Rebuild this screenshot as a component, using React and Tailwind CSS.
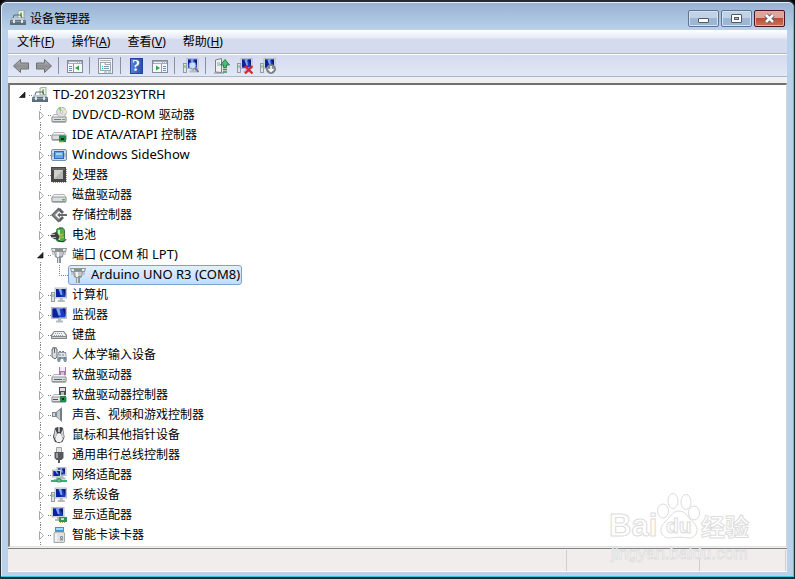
import React from 'react';

const CJK = /([\u3000-\u9fff]+)/;

function Label({ text }) {
  return (
    <span className="block h-5 pl-[5px] leading-[18px] whitespace-pre">
      {text.split(CJK).map((part, i) =>
        CJK.test(part) ? <span key={i}>{part}</span> : <span key={i} className="text-[13px]">{part}</span>
      )}
    </span>
  );
}

function Glyph({ children, size = 16 }) {
  return (
    <svg width={size} height={size} viewBox="0 0 16 16" className="block shrink-0" aria-hidden="true">
      {children}
    </svg>
  );
}

function Drive({ y = 9 }) {
  return (
    <g>
      <path d={`M3 ${y - 3}h10l2.500 3v4.500l-1 1.500h-13l-1-1.500v-4.500z`} fill="#b3b6b9" />
      <path d={`M3 ${y - 2}h10l1.500 2h-13z`} fill="#f4f5f5" />
      <rect x="1" y={y} width="14" height="4.500" rx="1" fill="#dcdedf" stroke="#83878b" strokeWidth=".8" />
    </g>
  );
}

function Screen({ x = 4, y = 1, w = 11, h = 9 }) {
  return (
    <g>
      <rect x={x} y={y} width={w} height={h} fill="#e6e9ee" stroke="#a7adb8" strokeWidth=".8" />
      <rect x={x + 1} y={y + 1} width={w - 2} height={h - 2} fill="#1a3cc4" />
      <path d={`M${x + 1} ${y + 1}h${w * 0.3}l2 ${h - 2}h-${w * 0.3 + 2}z`} fill="#0d2298" />
      <path d={`M${x + w * 0.3} ${y + 1}h${w * 0.25}l1 ${h - 4}h-${w * 0.15}z`} fill="#7da4f2" />
      <path d={`M${x + w - 4} ${y + 1}h3v${h - 3}z`} fill="#0c1c74" />
      <path d={`M${x + w / 2 - 1} ${y + h}h3v2h2v2h-7v-2h2z`} fill="#b4bac4" />
    </g>
  );
}

function Tower() {
  return (
    <g>
      <rect x=".5" y="5.500" width="3" height="9" fill="#e2e5e8" stroke="#8d939a" strokeWidth=".9" />
      <rect x="1.500" y="7" width="1" height="3" fill="#56b34c" />
    </g>
  );
}

const icons = {
  root: (
    <Glyph>
      <path d="M8 1l6-1v8h-6z" fill="#f3f4ee" stroke="#8d958e" strokeWidth=".8" />
      <path d="M10 3l2-1v4l-2 1z" fill="#71bf4d" />
      <path d="M3 8l1-3h7l1 3" fill="none" stroke="#5b6872" />
      <path d="M2 8h12l2 3v4h-16v-4z" fill="#5c6d7b" />
      <path d="M2 8h12l1 2h-14z" fill="#bdc9d1" />
      <path d="M1 11h14v1h-14z" fill="#8d9ba8" />
      <path d="M3 10h2v3h-2zM11 10h2v3h-2z" fill="#e1e6e9" />
    </Glyph>
  ),
  disc: (
    <Glyph>
      <Drive y={10} />
      <ellipse cx="10.500" cy="5" rx="4.800" ry="5" fill="#dedfe0" stroke="#9a9d9e" strokeWidth=".7" />
      <path d="M10 5L7 1a5 5 0 0 1 3-1z" fill="#84cf65" />
      <path d="M10 5l5-2v3z" fill="#f5eac7" />
      <circle cx="10.500" cy="5" r="1.300" fill="#fff" stroke="#999" strokeWidth=".6" />
      <path d="M3 12h7v1h-7z" fill="#777b7e" /><path d="M11 12h3v1h-3z" fill="#4dbb35" />
    </Glyph>
  ),
  ide: (
    <Glyph>
      <Drive y={8} />
      <rect x="8" y="9" width="7" height="6" fill="#23894b" />
      <path d="M9 8v1M11 8v1M13 8v1" stroke="#155e34" />
      <rect x="10" y="11" width="3" height="2" fill="#142d22" /><path d="M8 15h5" stroke="#d9ba4e" />
    </Glyph>
  ),
  side: (
    <Glyph>
      <rect x=".5" y="2.500" width="15" height="11" rx="1.500" fill="#c9dbec" stroke="#7792b0" />
      <rect x="3.500" y="4.500" width="9" height="7" fill="#69a5e6" stroke="#2f69b4" />
      <path d="M5 6h6v2h-6z" fill="#a9d0f5" />
      <path d="M2 6v4M14 6v4" stroke="#829fc0" />
    </Glyph>
  ),
  cpu: (
    <Glyph>
      <path d="M2 15.500h13M15.500 2v13" stroke="#bd9c4b" strokeDasharray="1 1" />
      <rect x="0" y="0" width="15" height="15" fill="#484745" />
      <path d="M1 1h13v2h-13z" fill="#686664" />
      <rect x="3" y="3" width="9" height="9" fill="#b4b4b3" />
      <path d="M3 3h9l-9 9z" fill="#d0d0ce" />
    </Glyph>
  ),
  disk: (
    <Glyph><Drive y={10} /><path d="M11 12h3v1.500h-3z" fill="#48c033" /></Glyph>
  ),
  storage: (
    <Glyph>
      <path d="M8.500 1.500L2 8l6.500 6.500" fill="none" stroke="#5d6062" strokeWidth="2.800" />
      <path d="M8 2l4 4M8 14l4-4" stroke="#5d6062" strokeWidth="2.800" />
      <path d="M8 2.500L2.500 8L8 13.500" fill="none" stroke="#a2a5a6" />
      <path d="M6 8l3-2.500v1.500h7v2h-7v1.500z" fill="#676b6d" />
    </Glyph>
  ),
  battery: (
    <Glyph>
      <path d="M8 0h4v2h-4z" fill="#8c8f89" />
      <rect x="5.500" y="1.500" width="8" height="13" rx="2" fill="#45b34c" stroke="#3a7a3b" />
      <path d="M7 3h2v10h-2z" fill="#c4f2bc" />
      <path d="M0 7l5-2 4 4-2 4-4-1-3-2z" fill="#3d413f" />
      <path d="M0 7.500h4M0 10.500h5" stroke="#b3b7b2" />
      <path d="M8 9l4-2M8 11l5-1" stroke="#d4ae39" strokeWidth="1.500" />
      <path d="M7 13c4 3 7 2 8-1" fill="none" stroke="#283329" />
    </Glyph>
  ),
  port: (
    <Glyph>
      <path d="M0 1h16l-1 4h-2l-1 5-2 1v5h-4v-5l-2-1-1-5h-2z" fill="#8f9598" />
      <path d="M1 2h14l-1 2h-12z" fill="#e9ebec" />
      <path d="M4 2h8v2h-8z" fill="#8a8f92" />
      <path d="M4 5h8l-1 4h-6z" fill="#c4c8ca" />
      <path d="M6 5h2v5h-2z" fill="#f4f5f5" />
      <path d="M7 11h1v5h-1z" fill="#dfe1e2" />
      <path d="M2 5v3M14 5v3" stroke="#a1a6a9" />
    </Glyph>
  ),
  computer: (<Glyph><Tower /><Screen x={4} y={1} w={11.5} h={10} /></Glyph>),
  monitor: (<Glyph><Screen x={0.5} y={0.5} w={15} h={11} /></Glyph>),
  keyboard: (
    <Glyph>
      <path d="M3 4h10l3 4v4h-16v-4z" fill="#83888d" />
      <path d="M3.500 5h9l2.500 4h-14z" fill="#eef0f1" />
      <path d="M4 6.500h8M3 8.500h10" stroke="#9aa0a7" strokeDasharray="1 1" />
      <path d="M1 10h14v1h-14z" fill="#c9cccf" />
    </Glyph>
  ),
  hid: (
    <Glyph>
      <path d="M2 0h3v2h1v8l-2 2-3-2v-8h1z" fill="#d9dcdf" stroke="#5b6167" strokeWidth=".9" />
      <path d="M3.500 1v5" stroke="#61676c" />
      <path d="M7 5h8l1 8-1 2h-2l-1-3h-2l-1 3h-2l-1-2z" fill="#8d959e" />
      <path d="M8 6h6l1 4h-8z" fill="#e4e7ea" />
      <path d="M8 4.500h6M8 8h6" stroke="#737b87" strokeDasharray="2 1" />
      <circle cx="9" cy="11" r="1" fill="#4f81b8" /><circle cx="14" cy="11" r="1" fill="#4f81b8" />
    </Glyph>
  ),
  floppy: (
    <Glyph>
      <Drive y={10} />
      <rect x="8" y="0" width="7" height="8" fill="#a577b5" /><rect x="9" y="0" width="5" height="4" fill="#f3edf5" />
      <rect x="10" y="5" width="3" height="3" fill="#d7bddd" />
      <path d="M3 12h8v1h-8z" fill="#555b60" /><path d="M12 12h2v1h-2z" fill="#4dbb35" />
    </Glyph>
  ),
  floppyctl: (
    <Glyph>
      <Drive y={10} />
      <rect x="8" y="0" width="7" height="8" fill="#4c4e50" /><rect x="9" y="1" width="5" height="3" fill="#dddfe0" />
      <rect x="10" y="5" width="3" height="3" fill="#b8bbbd" />
      <path d="M2 12h5v1h-5z" fill="#4c5256" />
      <rect x="9" y="9" width="6" height="6" fill="#24894a" /><rect x="11" y="11" width="2" height="2" fill="#112e20" />
    </Glyph>
  ),
  sound: (
    <Glyph>
      <path d="M1 5h4l6-5v15l-6-5h-4z" fill="#7e8991" />
      <path d="M6 5l3-2v10l-3-3z" fill="#c3c9ce" />
      <path d="M2 6h2v3h-2z" fill="#cfd4d7" /><path d="M10 2v11" stroke="#6a727a" />
    </Glyph>
  ),
  mouse: (
    <Glyph>
      <path d="M4 1l3-1h3l2 1 1.500 9-2 5-3.500 1-4-1-2-5z" fill="#44474b" />
      <path d="M4 2l2 4-1 4-2 1zM12 2l-2 4 1 4 2 1z" fill="#d3d5d7" />
      <path d="M6 7l2-1 2 1 2 5-2 3h-4l-2-3z" fill="#f2f2f2" />
      <path d="M8 0v5" stroke="#d4d7d9" strokeWidth="1.500" />
    </Glyph>
  ),
  usb: (
    <Glyph>
      <path d="M5.500 .5h5v5h-5z" fill="#dcdee0" stroke="#8d9196" strokeWidth=".8" />
      <path d="M3.500 5h9v6l-2 2h-1.500v3h-2v-3h-1.500l-2-2z" fill="#55595e" />
      <path d="M5 6h2v5h-2z" fill="#9a9fa3" />
    </Glyph>
  ),
  network: (
    <Glyph>
      <Screen x={6} y={0.5} w={9} h={8} /><Screen x={1.500} y={3} w={8.500} h={7} />
      <path d="M8 11v2M0 14h16" stroke="#3dae78" strokeWidth="1.800" />
      <path d="M6 12h4v3h-4z" fill="#61c895" stroke="#258d59" strokeWidth=".8" />
    </Glyph>
  ),
  display: (
    <Glyph>
      <Screen x={1} y={0.5} w={12} h={9.500} />
      <rect x="8" y="10" width="8" height="5" fill="#2d945b" /><rect x="10" y="11" width="3" height="2" fill="#d1dfb0" />
      <path d="M9 15.500h6" stroke="#c3a73c" strokeDasharray="1 1" />
    </Glyph>
  ),
  card: (
    <Glyph>
      <path d="M4 0h9v6h-9z" fill="#3a93d1" /><path d="M5 1h7v2h-7z" fill="#a5d8f4" />
      <path d="M4 5h8.500l1 1v9l-1 .5h-9.500v-9.500z" fill="#dfe2e4" stroke="#8f959b" strokeWidth=".8" />
      <path d="M5 7v8" stroke="#fff" />
      <rect x="9" y="11" width="3" height="2.500" fill="#969da3" /><path d="M9.500 11v-1.500h2V11" stroke="#858c92" fill="none" />
    </Glyph>
  ),
};

function Twisty({ open, first }) {
  if (first) {
    return (
      <svg width="15" height="20" className="block shrink-0" aria-hidden="true">
        <path d="M8 7v5.500h-5.500z" fill="#262626" stroke="#000" strokeWidth=".6" />
        <path d="M12 10.500h3" stroke="#808080" strokeDasharray="1 1" />
      </svg>
    );
  }
  return (
    <svg width="15" height="20" className="block shrink-0" aria-hidden="true">
      <path d="M4.500 0v5M4.500 17v3" stroke="#858585" strokeDasharray="1 1" />
      {open ? (
        <path d="M7 7.500v5.500h-5.500z" fill="#262626" stroke="#000" strokeWidth=".6" />
      ) : (
        <path d="M3.500 6.500v8l4-4z" fill="#fff" stroke="#a6a6a6" />
      )}
      <path d="M12 10.500h3" stroke="#808080" strokeDasharray="1 1" />
    </svg>
  );
}

const devices = [
  ['disc', 'DVD/CD-ROM 驱动器'],
  ['ide', 'IDE ATA/ATAPI 控制器'],
  ['side', 'Windows SideShow'],
  ['cpu', '处理器'],
  ['disk', '磁盘驱动器'],
  ['storage', '存储控制器'],
  ['battery', '电池'],
  ['port', '端口 (COM 和 LPT)', ['Arduino UNO R3 (COM8)']],
  ['computer', '计算机'],
  ['monitor', '监视器'],
  ['keyboard', '键盘'],
  ['hid', '人体学输入设备'],
  ['floppy', '软盘驱动器'],
  ['floppyctl', '软盘驱动器控制器'],
  ['sound', '声音、视频和游戏控制器'],
  ['mouse', '鼠标和其他指针设备'],
  ['usb', '通用串行总线控制器'],
  ['network', '网络适配器'],
  ['computer', '系统设备'],
  ['display', '显示适配器'],
  ['card', '智能卡读卡器'],
];

function Tree() {
  return (
    <ul role="tree" aria-label="设备">
      <li role="treeitem" aria-expanded="true">
        <div className="flex h-5 items-center pl-[7px]">
          <Twisty first />
          {icons.root}
          <Label text="TD-20120323YTRH" />
        </div>
        <ul role="group">
          {devices.map(([icon, name, children]) => (
            <li key={name} role="treeitem" aria-expanded={Boolean(children)}>
              <div className="flex h-5 items-center pl-[26px]">
                <Twisty open={Boolean(children)} />
                {icons[icon]}
                <Label text={name} />
              </div>
              {children && (
                <ul role="group">
                  {children.map((child) => (
                    <li key={child} role="treeitem" aria-selected="true" className="flex h-5 items-center pl-[26px]">
                      <svg width="32" height="20" className="block shrink-0" aria-hidden="true">
                        <path d="M4.500 0v20M23.500 0v10.500h9" fill="none" stroke="#858585" strokeDasharray="1 1" />
                      </svg>
                      <div className="flex h-5 items-center rounded-[3px] border border-[#7da2ce] bg-gradient-to-b from-[#e3effc] to-[#c4dcf8] px-px">
                        {icons.port}
                        <Label text={child} />
                      </div>
                    </li>
                  ))}
                </ul>
              )}
            </li>
          ))}
        </ul>
      </li>
    </ul>
  );
}

const Arrow = ({ flip }) => (
  <svg width="18" height="16" viewBox="0 0 18 16" className="block" aria-hidden="true">
    <defs>
      <linearGradient id={flip ? 'fwd' : 'bck'} x1="0" y1="0" x2="0" y2="1">
        <stop offset="0" stopColor="#c2c3c5" /><stop offset=".5" stopColor="#8d8e90" /><stop offset="1" stopColor="#b0b1b3" />
      </linearGradient>
    </defs>
    <path
      d={flip ? 'M16.500 8L9.500 1.500V5H1.500v6h8v3.500z' : 'M1.500 8l7-6.500V5h8v6h-8v3.500z'}
      fill={flip ? 'url(#fwd)' : 'url(#bck)'}
      stroke="#6c6e71"
    />
  </svg>
);

const Panel = ({ right }) => (
  <svg width="16" height="16" viewBox="0 0 16 16" className="block" aria-hidden="true">
    <rect x=".5" y="2.500" width="15" height="12" fill="#f7f8f9" stroke="#818b96" />
    <path d="M1 3h14v3h-14z" fill="#a5aeb8" /><path d="M2 4.500h8" stroke="#eef1f4" />
    <path d="M11 4.500h3" stroke="#f5f7f9" strokeDasharray="1 1" />
    <path d={right ? 'M9.500 6v8' : 'M6.500 6v8'} stroke="#919ba5" />
    <path d={right ? 'M4 7.500v5l4-2.500z' : 'M12 7.500v5l-4-2.500z'} fill="#36a445" />
    <path d={right ? 'M11 8.500h3M11 10.500h3M11 12.500h3' : 'M2 8.500h3M2 10.500h3M2 12.500h3'} stroke="#738cab" />
  </svg>
);

const Props = () => (
  <svg width="16" height="16" viewBox="0 0 16 16" className="block" aria-hidden="true">
    <rect x=".5" y=".5" width="14" height="15" fill="#f4f6f8" stroke="#8d949c" />
    <path d="M2 2.500h11" stroke="#aab3bd" />
    <rect x="2.500" y="4.500" width="10" height="8" fill="#fff" stroke="#9da6b0" />
    <path d="M7 4v2.500h5" stroke="#9da6b0" fill="none" />
    <path d="M6 8.500h5M6 10.500h5" stroke="#7f91a8" /><path d="M4 8.500h1M4 10.500h1" stroke="#33a8cf" />
    <path d="M6 14h3M10 14h3" stroke="#7daab9" />
  </svg>
);

const Help = () => (
  <span className="flex h-4 w-[13px] items-center justify-center border border-[#22449d] bg-gradient-to-r from-[#5c82d2] to-[#2850b4] font-['Liberation_Serif',serif] text-base leading-4 font-bold text-white">?</span>
);

const Scan = () => (
  <Glyph>
    <Tower /><Screen x={4} y={0.5} w={11} h={10} />
    <circle cx="9.500" cy="7.500" r="3.500" fill="#d9effb" fillOpacity=".9" stroke="#6e93b8" />
    <path d="M12 10l3.500 4" stroke="#6f7884" strokeWidth="2" />
  </Glyph>
);

const Update = () => (
  <Glyph>
    <path d="M1.500 2l6-1.500v14l-6-.5z" fill="#eef0f1" stroke="#6e7378" strokeWidth=".9" />
    <path d="M0 15h10" stroke="#84898d" /><path d="M3 5h3M3 7h3" stroke="#96a0a5" />
    <path d="M11 1.500L6.500 7h3v2.500h3V7h3z" fill="#4fba72" stroke="#1b783b" strokeWidth=".9" />
    <path d="M9 11.500h4M9 14h4" stroke="#31955a" strokeWidth="1.500" />
  </Glyph>
);

const Uninstall = () => (
  <Glyph>
    <Tower /><Screen x={4} y={0.5} w={11} h={10} />
    <path d="M8 8l7.500 7.500M15.500 8l-7.500 7.500" stroke="#dd2427" strokeWidth="2.200" />
  </Glyph>
);

const Disable = () => (
  <Glyph>
    <Tower /><Screen x={4} y={0.5} w={11} h={10} />
    <circle cx="11" cy="11" r="4.500" fill="#858a91" stroke="#70757b" strokeWidth=".8" />
    <path d="M11 8v5M8.500 11l2.500 2.500 2.500-2.500" fill="none" stroke="#fff" strokeWidth="1.500" />
  </Glyph>
);

function Tool({ label, wide, children }) {
  return (
    <button type="button" aria-label={label} className={wide ? 'flex h-5 w-[23px] items-center justify-center pl-px' : 'flex h-5 w-6 items-center justify-center pl-[2px]'}>
      {children}
    </button>
  );
}

const Divider = () => <span className="mx-[3px] h-[17px] w-px bg-[#8b8f99]" />;

const menus = [
  ['文件', 'F'],
  ['操作', 'A'],
  ['查看', 'V'],
  ['帮助', 'H'],
];

const captionButton =
  'flex h-[17px] w-[31px] items-center justify-center rounded-[2px] border border-[#5e7391] bg-gradient-to-b from-[#c1d2e6] from-50% to-[#9cb6d3] to-50% shadow-[inset_0_0_0_1px_#d5e2f0]';

function Watermark() {
  return (
    <svg width="152" height="74" className="pointer-events-none absolute right-9 bottom-3" fill="#fff" stroke="#dcdcdc">
      <g fontFamily="'Liberation Sans', sans-serif" fontWeight="bold">
        <text x="3" y="45" fontSize="31">Bai</text>
        <ellipse cx="57" cy="20" rx="5.500" ry="7" />
        <ellipse cx="67" cy="10" rx="5" ry="7.500" />
        <ellipse cx="80" cy="11" rx="5" ry="7.500" />
        <ellipse cx="88" cy="22" rx="5.500" ry="7" />
        <path d="M73 20c7 0 9 7 14 11 8 7 3 17-5 16-6-1-12-1-18 0-8 1-13-9-5-16 5-4 7-11 14-11z" />
        <text x="60" y="42" fontSize="21">du</text>
      </g>
      <text x="95" y="45" fontSize="24" fontWeight="bold" fontFamily="'Noto Sans CJK SC', sans-serif">经验</text>
      <text x="5" y="68" fontSize="17" strokeWidth=".8" fontFamily="'Liberation Sans', sans-serif">jingyan.baidu.com</text>
    </svg>
  );
}

export default function App() {
  return (
    <div className="bg-black">
      <div className="relative flex min-h-screen flex-col rounded-t-[7px] border border-t-2 border-b-2 border-[#252c36] bg-[#b9d1ea] font-['Noto_Sans','Noto_Sans_CJK_SC',sans-serif] text-xs text-black shadow-[inset_-1px_-1px_0_#3bc7df,inset_1px_1px_0_#e4edf7]">
        <header className="mx-px mt-px flex h-[27px] items-start rounded-t-[5px] bg-gradient-to-b from-[#98b3d2] to-[#b9d1ea] px-2">
          <span className="pt-[7px]">{icons.root}</span>
          <h1 className="pt-[6px] pl-1 leading-5">设备管理器</h1>
          <div className="ml-auto flex gap-[2px] pt-[7px]">
            <button type="button" aria-label="最小化" className={captionButton}>
              <span className="mt-1 h-[5px] w-[11px] rounded-[1px] border border-[#535666] bg-white" />
            </button>
            <button type="button" aria-label="最大化" className={captionButton}>
              <span className="flex h-[9px] w-[11px] items-center justify-center rounded-[1px] border border-[#535666] bg-white">
                <span className="h-[3px] w-[5px] border border-[#535666] bg-[#a9c0db]" />
              </span>
            </button>
            <button type="button" aria-label="关闭" className="flex h-[17px] w-[31px] items-center justify-center rounded-[2px] border border-[#4b1520] bg-gradient-to-b from-[#dda49a] from-45% via-[#bd4b34] via-50% to-[#cf7259] shadow-[inset_0_0_0_1px_#e4aea3]">
              <svg width="13" height="11" viewBox="0 0 13 11" aria-hidden="true">
                <path d="M3 2l7 7M10 2l-7 7" stroke="#535666" strokeWidth="4.500" />
                <path d="M3 2l7 7M10 2l-7 7" stroke="#fff" strokeWidth="2.600" />
              </svg>
            </button>
          </div>
        </header>

        <main className="mx-[7px] mb-[5px] flex flex-1 flex-col bg-[#f0f0f0]">
          <nav className="flex h-6 items-center gap-px border-b border-[#b4b8c2] bg-gradient-to-b from-white via-[#e4eaf5] via-35% to-[#d5dbee] to-40% pl-px">
            {menus.map(([name, key]) => (
              <button key={name} type="button" className="px-2 text-left leading-5 whitespace-nowrap">
                {name}(<u>{key}</u>)
              </button>
            ))}
          </nav>

          <div role="toolbar" aria-label="工具" className="flex h-[23px] items-center border-t border-b border-t-white border-b-[#a8b6ce] bg-gradient-to-b from-[#d5daee] to-[#e2e8f5]">
            <Tool label="后退"><Arrow /></Tool>
            <Tool label="前进" wide><Arrow flip /></Tool>
            <Divider />
            <Tool label="控制台树"><Panel /></Tool>
            <Divider />
            <Tool label="属性"><Props /></Tool>
            <Divider />
            <Tool label="帮助" wide><Help /></Tool>
            <Tool label="操作窗格"><Panel right /></Tool>
            <Divider />
            <Tool label="扫描检测硬件改动"><Scan /></Tool>
            <Divider />
            <Tool label="更新驱动程序"><Update /></Tool>
            <Tool label="卸载" wide><Uninstall /></Tool>
            <Tool label="禁用" wide><Disable /></Tool>
          </div>

          <section className="mt-[6px] flex-1 border-t-2 border-r border-b border-l-2 border-t-[#707070] border-r-[#d5d5d5] border-b-[#e3e3e3] border-l-[#808080] bg-white">
            <Tree />
          </section>

          <footer className="mt-px flex h-6 border-t border-b border-t-[#828282] border-b-white bg-[#f0edec] pt-px">
            <span className="flex-1 border-r border-[#cfcdcd]" />
            <span className="w-[133px] border-r border-[#cfcdcd]" />
            <span className="mr-px w-[86px] border-r border-[#cfcdcd]" />
          </footer>
        </main>
        <Watermark />
      </div>
    </div>
  );
}
